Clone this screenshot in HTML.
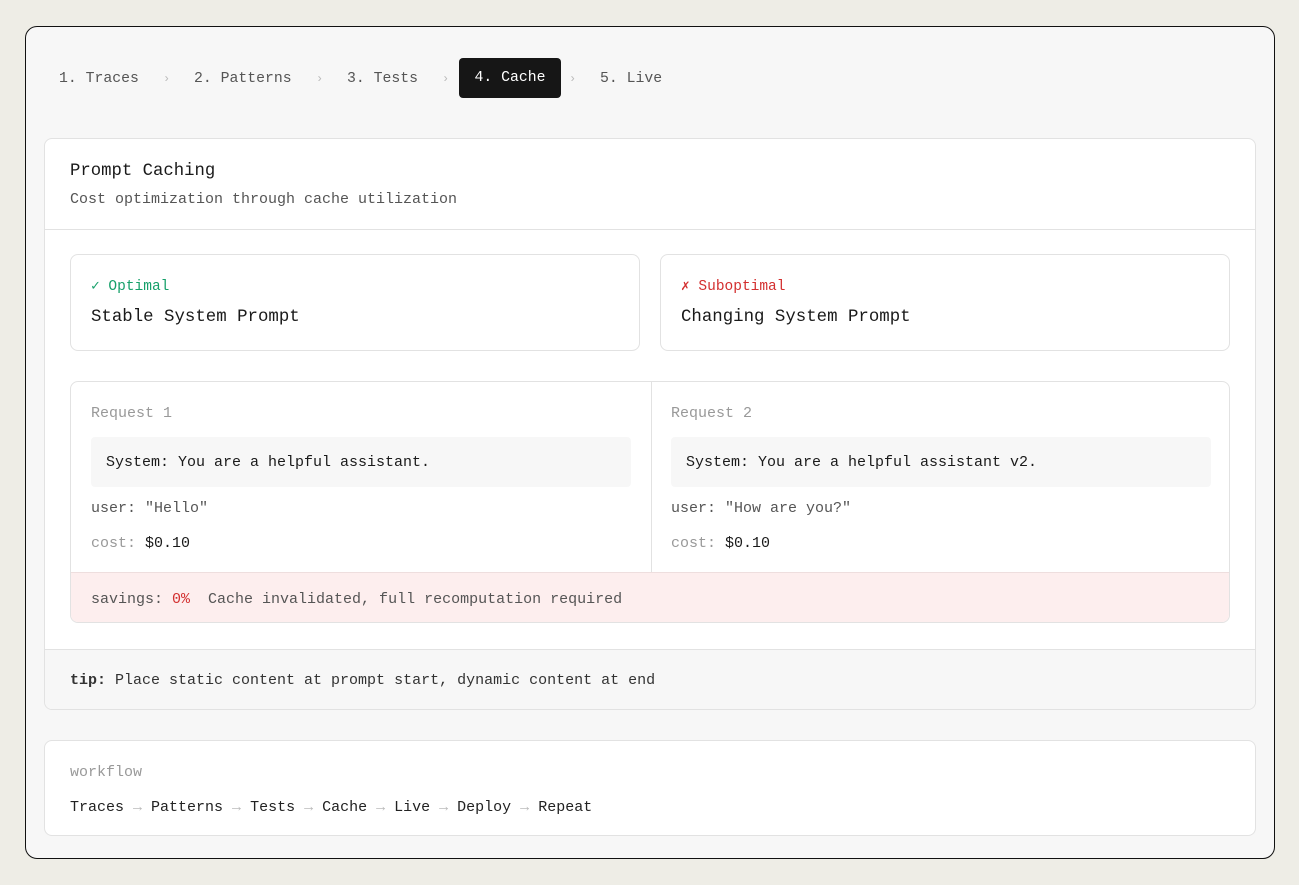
<!DOCTYPE html>
<html><head><style>
*{box-sizing:border-box;margin:0;padding:0}
body{width:1299px;height:885px;background:#eeede6;font-family:"Liberation Mono",monospace;color:#1a1a1a;position:relative;overflow:hidden}
.frame{position:absolute;left:25px;top:26px;width:1250px;height:833px;border:1.5px solid #111;border-radius:12px;background:#f7f7f7}
.abs{position:absolute}
.nav{font-size:14.8px;color:#555;top:71px}
.sep{color:#bbb;font-size:12px;top:72px}
.pill{left:459px;top:58px;width:102px;height:40px;background:#161616;border-radius:4px;color:#fff;font-size:14.8px;line-height:41px;text-align:center}
.card{background:#fff;border:1px solid #e2e2e2;border-radius:8px}
.t{font-size:15px}
</style></head><body>
<div class="frame"></div>
<div class="abs nav" style="left:59px">1. Traces</div>
<div class="abs sep" style="left:163px">›</div>
<div class="abs nav" style="left:194px">2. Patterns</div>
<div class="abs sep" style="left:316px">›</div>
<div class="abs nav" style="left:347px">3. Tests</div>
<div class="abs sep" style="left:442px">›</div>
<div class="abs pill">4. Cache</div>
<div class="abs sep" style="left:569px">›</div>
<div class="abs nav" style="left:600px">5. Live</div>

<div class="abs card" style="left:44px;top:138px;width:1212px;height:572px;overflow:hidden">
  <div class="abs" style="left:25px;top:23px;font-size:17.3px">Prompt Caching</div>
  <div class="abs t" style="left:25px;top:52px;color:#555">Cost optimization through cache utilization</div>
  <div class="abs" style="left:0;top:90px;width:100%;height:1px;background:#e2e2e2"></div>
  <div class="abs" style="left:0;top:510px;width:100%;height:62px;background:#f7f7f7;border-top:1px solid #e2e2e2"></div>
  <div class="abs t" style="left:25px;top:533px;color:#333"><b>tip:</b> Place static content at prompt start, dynamic content at end</div>
</div>

<div class="abs card" style="left:70px;top:254px;width:570px;height:97px">
  <div class="abs" style="left:20px;top:23px;font-size:14.5px;color:#16a06a">✓ Optimal</div>
  <div class="abs" style="left:20px;top:53px;font-size:17.4px">Stable System Prompt</div>
</div>
<div class="abs card" style="left:660px;top:254px;width:570px;height:97px">
  <div class="abs" style="left:20px;top:23px;font-size:14.5px;color:#d32f2f">✗ Suboptimal</div>
  <div class="abs" style="left:20px;top:53px;font-size:17.4px">Changing System Prompt</div>
</div>

<div class="abs card" style="left:70px;top:381px;width:1160px;height:242px;overflow:hidden">
  <div class="abs" style="left:580px;top:0;width:1px;height:190px;background:#e2e2e2"></div>
  <div class="abs t" style="left:20px;top:23px;color:#999">Request 1</div>
  <div class="abs t" style="left:20px;top:55px;width:540px;height:50px;background:#f7f7f7;border-radius:4px;padding:17px 15px">System: You are a helpful assistant.</div>
  <div class="abs t" style="left:20px;top:118px;color:#555">user: "Hello"</div>
  <div class="abs t" style="left:20px;top:153px;color:#999">cost: <span style="color:#1a1a1a">$0.10</span></div>
  <div class="abs t" style="left:600px;top:23px;color:#999">Request 2</div>
  <div class="abs t" style="left:600px;top:55px;width:540px;height:50px;background:#f7f7f7;border-radius:4px;padding:17px 15px">System: You are a helpful assistant v2.</div>
  <div class="abs t" style="left:600px;top:118px;color:#555">user: "How are you?"</div>
  <div class="abs t" style="left:600px;top:153px;color:#999">cost: <span style="color:#1a1a1a">$0.10</span></div>
  <div class="abs" style="left:0;top:190px;width:100%;height:52px;background:#fdeeee;border-top:1px solid #eedede"></div>
  <div class="abs t" style="left:20px;top:209px;color:#555">savings: <span style="color:#d32f2f">0%</span>&nbsp; Cache invalidated, full recomputation required</div>
</div>

<div class="abs card" style="left:44px;top:740px;width:1212px;height:96px">
  <div class="abs t" style="left:25px;top:23px;color:#999">workflow</div>
  <div class="abs t" style="left:25px;top:58px;color:#222">Traces <span style="color:#bbb">→</span> Patterns <span style="color:#bbb">→</span> Tests <span style="color:#bbb">→</span> Cache <span style="color:#bbb">→</span> Live <span style="color:#bbb">→</span> Deploy <span style="color:#bbb">→</span> Repeat</div>
</div>
</body></html>
